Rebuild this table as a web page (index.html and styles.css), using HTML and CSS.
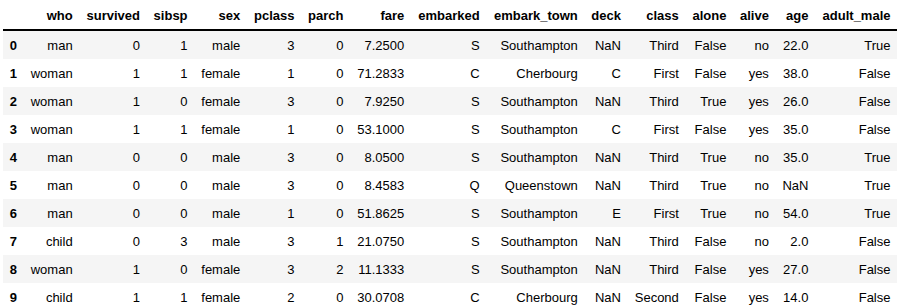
FILE: index.html
```html
<!DOCTYPE html>
<html lang="en">
<head>
    <meta charset="UTF-8">
    <title>titanic.head(10)</title>
    <link rel="stylesheet" href="styles.css">
</head>
<body>
    <div class="output-area">
        <table class="dataframe">
            <thead>
                <tr>
                    <th></th>
                    <th>who</th>
                    <th>survived</th>
                    <th>sibsp</th>
                    <th>sex</th>
                    <th>pclass</th>
                    <th>parch</th>
                    <th>fare</th>
                    <th>embarked</th>
                    <th>embark_town</th>
                    <th>deck</th>
                    <th>class</th>
                    <th>alone</th>
                    <th>alive</th>
                    <th>age</th>
                    <th>adult_male</th>
                </tr>
            </thead>
            <tbody>
                <tr>
                    <th>0</th>
                    <td>man</td><td>0</td><td>1</td><td>male</td><td>3</td><td>0</td><td>7.2500</td><td>S</td><td>Southampton</td><td>NaN</td><td>Third</td><td>False</td><td>no</td><td>22.0</td><td>True</td>
                </tr>
                <tr>
                    <th>1</th>
                    <td>woman</td><td>1</td><td>1</td><td>female</td><td>1</td><td>0</td><td>71.2833</td><td>C</td><td>Cherbourg</td><td>C</td><td>First</td><td>False</td><td>yes</td><td>38.0</td><td>False</td>
                </tr>
                <tr>
                    <th>2</th>
                    <td>woman</td><td>1</td><td>0</td><td>female</td><td>3</td><td>0</td><td>7.9250</td><td>S</td><td>Southampton</td><td>NaN</td><td>Third</td><td>True</td><td>yes</td><td>26.0</td><td>False</td>
                </tr>
                <tr>
                    <th>3</th>
                    <td>woman</td><td>1</td><td>1</td><td>female</td><td>1</td><td>0</td><td>53.1000</td><td>S</td><td>Southampton</td><td>C</td><td>First</td><td>False</td><td>yes</td><td>35.0</td><td>False</td>
                </tr>
                <tr>
                    <th>4</th>
                    <td>man</td><td>0</td><td>0</td><td>male</td><td>3</td><td>0</td><td>8.0500</td><td>S</td><td>Southampton</td><td>NaN</td><td>Third</td><td>True</td><td>no</td><td>35.0</td><td>True</td>
                </tr>
                <tr>
                    <th>5</th>
                    <td>man</td><td>0</td><td>0</td><td>male</td><td>3</td><td>0</td><td>8.4583</td><td>Q</td><td>Queenstown</td><td>NaN</td><td>Third</td><td>True</td><td>no</td><td>NaN</td><td>True</td>
                </tr>
                <tr>
                    <th>6</th>
                    <td>man</td><td>0</td><td>0</td><td>male</td><td>1</td><td>0</td><td>51.8625</td><td>S</td><td>Southampton</td><td>E</td><td>First</td><td>True</td><td>no</td><td>54.0</td><td>True</td>
                </tr>
                <tr>
                    <th>7</th>
                    <td>child</td><td>0</td><td>3</td><td>male</td><td>3</td><td>1</td><td>21.0750</td><td>S</td><td>Southampton</td><td>NaN</td><td>Third</td><td>False</td><td>no</td><td>2.0</td><td>False</td>
                </tr>
                <tr>
                    <th>8</th>
                    <td>woman</td><td>1</td><td>0</td><td>female</td><td>3</td><td>2</td><td>11.1333</td><td>S</td><td>Southampton</td><td>NaN</td><td>Third</td><td>False</td><td>yes</td><td>27.0</td><td>False</td>
                </tr>
                <tr>
                    <th>9</th>
                    <td>child</td><td>1</td><td>1</td><td>female</td><td>2</td><td>0</td><td>30.0708</td><td>C</td><td>Cherbourg</td><td>NaN</td><td>Second</td><td>False</td><td>yes</td><td>14.0</td><td>False</td>
                </tr>
            </tbody>
        </table>
    </div>
</body>
</html>
```

FILE: styles.css
```css
* {
    margin: 0;
    padding: 0;
    box-sizing: border-box;
}

body {
    font-family: 'Liberation Sans', Arial, sans-serif;
    background: white;
    color: black;
}

.output-area {
    padding: 1px 2px 0 3px;
}

.dataframe {
    width: 894px;
    border: none;
    border-collapse: collapse;
    border-spacing: 0;
    color: black;
    font-size: 13px;
}

.dataframe thead {
    border-bottom: 2px solid black;
    vertical-align: bottom;
}

.dataframe th,
.dataframe td {
    text-align: right;
    vertical-align: middle;
    padding: 6.5px;
    line-height: 15px;
    white-space: nowrap;
    border: none;
}

.dataframe th {
    font-weight: bold;
}

.dataframe tbody tr:nth-child(odd) {
    background: #f5f5f5;
}
```
